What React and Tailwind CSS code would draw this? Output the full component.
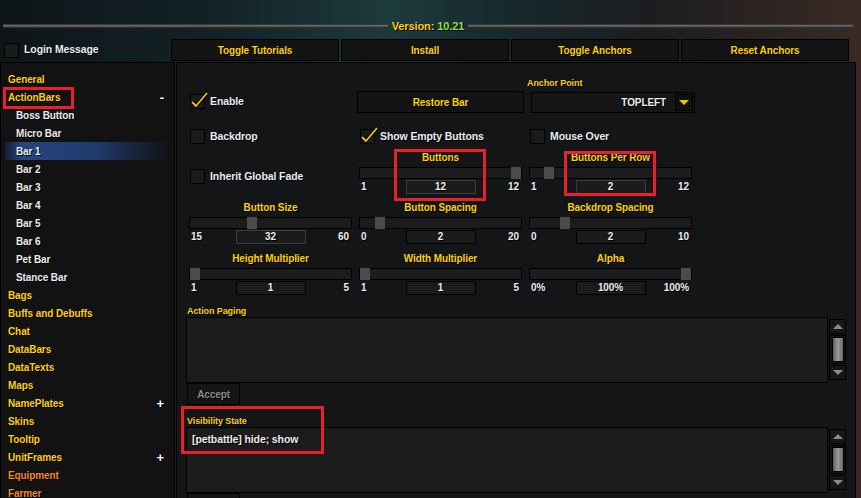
import React from 'react'

const menu = [
  { t: 'General', k: 'top' },
  { t: 'ActionBars', k: 'top', sign: '-' },
  { t: 'Boss Button', k: 'sub' },
  { t: 'Micro Bar', k: 'sub' },
  { t: 'Bar 1', k: 'sub', active: true },
  { t: 'Bar 2', k: 'sub' },
  { t: 'Bar 3', k: 'sub' },
  { t: 'Bar 4', k: 'sub' },
  { t: 'Bar 5', k: 'sub' },
  { t: 'Bar 6', k: 'sub' },
  { t: 'Pet Bar', k: 'sub' },
  { t: 'Stance Bar', k: 'sub' },
  { t: 'Bags', k: 'top' },
  { t: 'Buffs and Debuffs', k: 'top' },
  { t: 'Chat', k: 'top' },
  { t: 'DataBars', k: 'top' },
  { t: 'DataTexts', k: 'top' },
  { t: 'Maps', k: 'top' },
  { t: 'NamePlates', k: 'top', sign: '+' },
  { t: 'Skins', k: 'top' },
  { t: 'Tooltip', k: 'top' },
  { t: 'UnitFrames', k: 'top', sign: '+' },
  { t: 'Equipment', k: 'orange' },
  { t: 'Farmer', k: 'orange' },
]

const Check = ({ on }) => (
  <div className="relative w-[15px] h-[15px] shrink-0 bg-[#1a1a1a] border border-black">
    {on && (
      <svg className="absolute -left-[1px] -top-[5px]" width="20" height="20" viewBox="0 0 20 20">
        <polyline points="2,12 6,16 17,3" fill="none" stroke="#000" strokeWidth="3.6" strokeLinejoin="round" />
        <polyline points="2,12 6,16 17,3" fill="none" stroke="#f2c500" strokeWidth="1.8" strokeLinejoin="round" />
      </svg>
    )}
  </div>
)

const CheckRow = ({ label, on }) => (
  <div className="flex items-center gap-[5px] pl-[1px] h-[15px]">
    <Check on={on} />
    <span className="text-[10.5px] leading-[15px] font-bold text-[#ececec] [text-shadow:1px_1px_0_#000]">{label}</span>
  </div>
)

const Slider = ({ label, min, max, value, v0, v1, cur, lit }) => {
  const pos = ((cur - v0) / (v1 - v0)) * 151
  return (
    <div className="flex flex-col w-[163px]">
      <div className="h-[12px] leading-[12px] text-center text-[10px] font-bold text-[#ffd100] [text-shadow:1px_1px_0_#000]">{label}</div>
      <div className="relative mt-[3px] h-[12px] bg-[#1c1c1c] border border-black">
        <div className="absolute -top-[1px] -bottom-[1px] w-[10px] bg-[#4b4b4b]" style={{ left: pos }} />
      </div>
      <div className="mt-[1px] h-[14px] grid grid-cols-[1fr_70px_1fr] items-center text-[10px] leading-[12px] font-bold text-[#ececec] [text-shadow:1px_1px_0_#000]">
        <span className="pl-[2px]">{min}</span>
        <div className={`h-[14px] leading-[12px] text-center bg-[#1b1b1b] border ${lit ? 'border-[#3c3c3c]' : 'border-black'}`}>{value}</div>
        <span className="text-right pr-[3px]">{max}</span>
      </div>
    </div>
  )
}

const Arrow = ({ up, color = '#8a8a8a' }) => (
  <svg width="10" height="5" viewBox="0 0 10 5">
    <polygon points={up ? '0,5 10,5 5,0' : '0,0 10,0 5,5'} fill={color} />
  </svg>
)

const Scroll = () => (
  <div className="w-[17px] ml-[1px] flex flex-col pt-[2px]">
    <div className="h-[15px] bg-[#161616] border border-black flex items-center justify-center"><Arrow up /></div>
    <div className="mt-[1px] h-[29px] border border-black flex items-center justify-center">
      <div className="w-[12px] h-[25px] border border-black bg-[linear-gradient(90deg,#5e5e5e,#9a9a9a_50%,#6a6a6a)]" />
    </div>
    <div className="mt-[1px] h-[15px] bg-[#161616] border border-black flex items-center justify-center"><Arrow /></div>
  </div>
)

const TopBtn = ({ children }) => (
  <div className="w-[168px] h-[22px] flex items-center justify-center bg-[#131313] border border-black text-[10px] font-bold text-[#ffd100] [text-shadow:1px_1px_0_#000]">
    {children}
  </div>
)

const Line = () => (
  <div className="flex-1 h-[4px] bg-[linear-gradient(180deg,#1c1c1c,#6a6a6a_35%,#4a4a4a_70%,#1a1a1a)]" />
)

export default function App() {
  return (
    <div className="relative w-[861px] h-[498px] overflow-hidden tracking-[-0.1px] font-['Liberation_Sans',Arial,sans-serif] bg-[linear-gradient(90deg,#0e1518_0%,#132226_25%,#1d3a3d_45%,#172a2d_58%,#1c1d20_75%,#3a2924_100%)]">
      {/* version header */}
      <div className="flex items-center h-[12px] mt-[20px] pl-[3px] pr-[8px] gap-[4px]">
        <Line />
        <div className="text-[11px] font-bold leading-[12px] [text-shadow:1px_1px_0_#000] whitespace-nowrap">
          <span className="text-[#ffd100]">Version: </span>
          <span className="text-[#8be04e]">10.21</span>
        </div>
        <Line />
      </div>

      {/* toolbar */}
      <div className="flex mt-[7px] h-[22px]">
        <div className="w-[171px] flex items-center gap-[5px] pl-[4px]">
          <div className="w-[15px] h-[15px] bg-[#1a1a1a] border border-black" />
          <span className="text-[10.5px] font-bold text-[#ececec] [text-shadow:1px_1px_0_#000]">Login Message</span>
        </div>
        <div className="flex gap-[2px]">
          <TopBtn>Toggle Tutorials</TopBtn>
          <TopBtn>Install</TopBtn>
          <TopBtn>Toggle Anchors</TopBtn>
          <TopBtn>Reset Anchors</TopBtn>
        </div>
      </div>

      {/* body */}
      <div className="flex mt-[1px] h-[440px]">
        <div className="w-[175px] h-full bg-[#121212] border border-black pt-[7px]">
          {menu.map((m) => (
            <div
              key={m.t}
              className={`relative h-[18px] flex items-center justify-between pr-[10px] text-[10px] font-bold [text-shadow:1px_1px_0_#000] ${
                m.k === 'sub' ? 'pl-[15px] text-[#ececec]' : 'pl-[7px]'
              } ${m.k === 'top' ? 'text-[#ffd100]' : ''} ${m.k === 'orange' ? 'text-[#f28a1c]' : ''} ${
                m.active ? 'mx-[4px] !pl-[11px] bg-[linear-gradient(90deg,rgba(30,55,110,0.35),#26457f_10%,#1f3a6c_55%,rgba(20,35,70,0)_100%)]' : ''
              }`}
            >
              <span>{m.t}</span>
              {m.sign && <span className="text-white text-[13px] leading-[13px]">{m.sign}</span>}
            </div>
          ))}
        </div>

        <div className="ml-[1px] w-[680px] h-full bg-[#131517] border border-black overflow-hidden">
          <div className="pl-[12px] pt-[14px]">
            {/* row 1 */}
            <div className="grid grid-cols-[163px_163px_163px] gap-x-[7px] h-[36px] items-end">
              <div className="pb-[4px]"><CheckRow label="Enable" on /></div>
              <div className="-ml-[2px] w-[167px] h-[22px] flex items-center justify-center bg-[#131313] border border-black text-[10px] font-bold text-[#ffd100] [text-shadow:1px_1px_0_#000]">
                Restore Bar
              </div>
              <div className="flex flex-col">
                <div className="h-[12px] leading-[12px] -ml-[2px] text-[9px] font-bold text-[#ffd100] [text-shadow:1px_1px_0_#000]">Anchor Point</div>
                <div className="mt-[3px] ml-[2px] w-[164px] h-[21px] bg-[#151515] border border-black flex items-center justify-end">
                  <span className="mr-[9px] text-[10px] font-bold text-[#ececec] [text-shadow:1px_1px_0_#000]">TOPLEFT</span>
                  <div className="mr-[1px] w-[18px] h-[17px] bg-[#0f0f0f] border border-black flex items-center justify-center">
                    <Arrow color="#f2c500" />
                  </div>
                </div>
              </div>
            </div>

            {/* row 2 */}
            <div className="grid grid-cols-[163px_163px_163px] gap-x-[7px] mt-[16px]">
              <CheckRow label="Backdrop" />
              <CheckRow label="Show Empty Buttons" on />
              <CheckRow label="Mouse Over" />
            </div>

            {/* row 3 */}
            <div className="grid grid-cols-[163px_163px_163px] gap-x-[7px] mt-[8px]">
              <div className="pt-[17px]"><CheckRow label="Inherit Global Fade" /></div>
              <Slider label="Buttons" min="1" max="12" value="12" v0={1} v1={12} cur={12} lit />
              <Slider label="Buttons Per Row" min="1" max="12" value="2" v0={1} v1={12} cur={2} lit />
            </div>

            {/* row 4 */}
            <div className="grid grid-cols-[163px_163px_163px] gap-x-[7px] mt-[8px]">
              <Slider label="Button Size" min="15" max="60" value="32" v0={15} v1={60} cur={32} lit />
              <Slider label="Button Spacing" min="0" max="20" value="2" v0={0} v1={20} cur={2} />
              <Slider label="Backdrop Spacing" min="0" max="10" value="2" v0={0} v1={10} cur={2} />
            </div>

            {/* row 5 */}
            <div className="grid grid-cols-[163px_163px_163px] gap-x-[7px] mt-[9px]">
              <Slider label="Height Multiplier" min="1" max="5" value="1" v0={1} v1={5} cur={1} />
              <Slider label="Width Multiplier" min="1" max="5" value="1" v0={1} v1={5} cur={1} />
              <Slider label="Alpha" min="0%" max="100%" value="100%" v0={0} v1={100} cur={100} />
            </div>
          </div>

          {/* action paging */}
          <div className="pl-[9px] mt-[10px]">
            <div className="h-[12px] leading-[12px] pl-[1px] text-[9px] font-bold text-[#ffd100] [text-shadow:1px_1px_0_#000]">Action Paging</div>
            <div className="flex">
              <div className="w-[642px] h-[66px] bg-[#1c1c1c] border border-black" />
              <Scroll />
            </div>
            <div className="ml-[1px] w-[53px] h-[22px] flex items-center justify-center bg-[#151515] border border-black text-[10px] font-bold text-[#8a8a8a] [text-shadow:1px_1px_0_#000]">
              Accept
            </div>

            <div className="mt-[10px] h-[12px] leading-[12px] pl-[1px] text-[9px] font-bold text-[#ffd100] [text-shadow:1px_1px_0_#000]">Visibility State</div>
            <div className="flex">
              <div className="w-[642px] h-[66px] bg-[#1c1c1c] border border-black pl-[5px] pt-[4px] text-[10.5px] leading-[14px] font-bold text-[#ececec] [text-shadow:1px_1px_0_#000]">
                [petbattle] hide; show
              </div>
              <Scroll />
            </div>
            <div className="ml-[1px] w-[53px] h-[22px] bg-[#151515] border border-black" />
          </div>
        </div>
      </div>

      {/* annotation boxes */}
      <div className="absolute left-[3px] top-[87px] w-[71px] h-[22px] border-[3px] border-[#e8202a]" />
      <div className="absolute left-[394px] top-[149px] w-[92px] h-[52px] border-[3px] border-[#e8202a]" />
      <div className="absolute left-[564px] top-[151px] w-[92px] h-[45px] border-[3px] border-[#e8202a]" />
      <div className="absolute left-[181px] top-[406px] w-[143px] h-[48px] border-[3px] border-[#e8202a]" />
    </div>
  )
}
